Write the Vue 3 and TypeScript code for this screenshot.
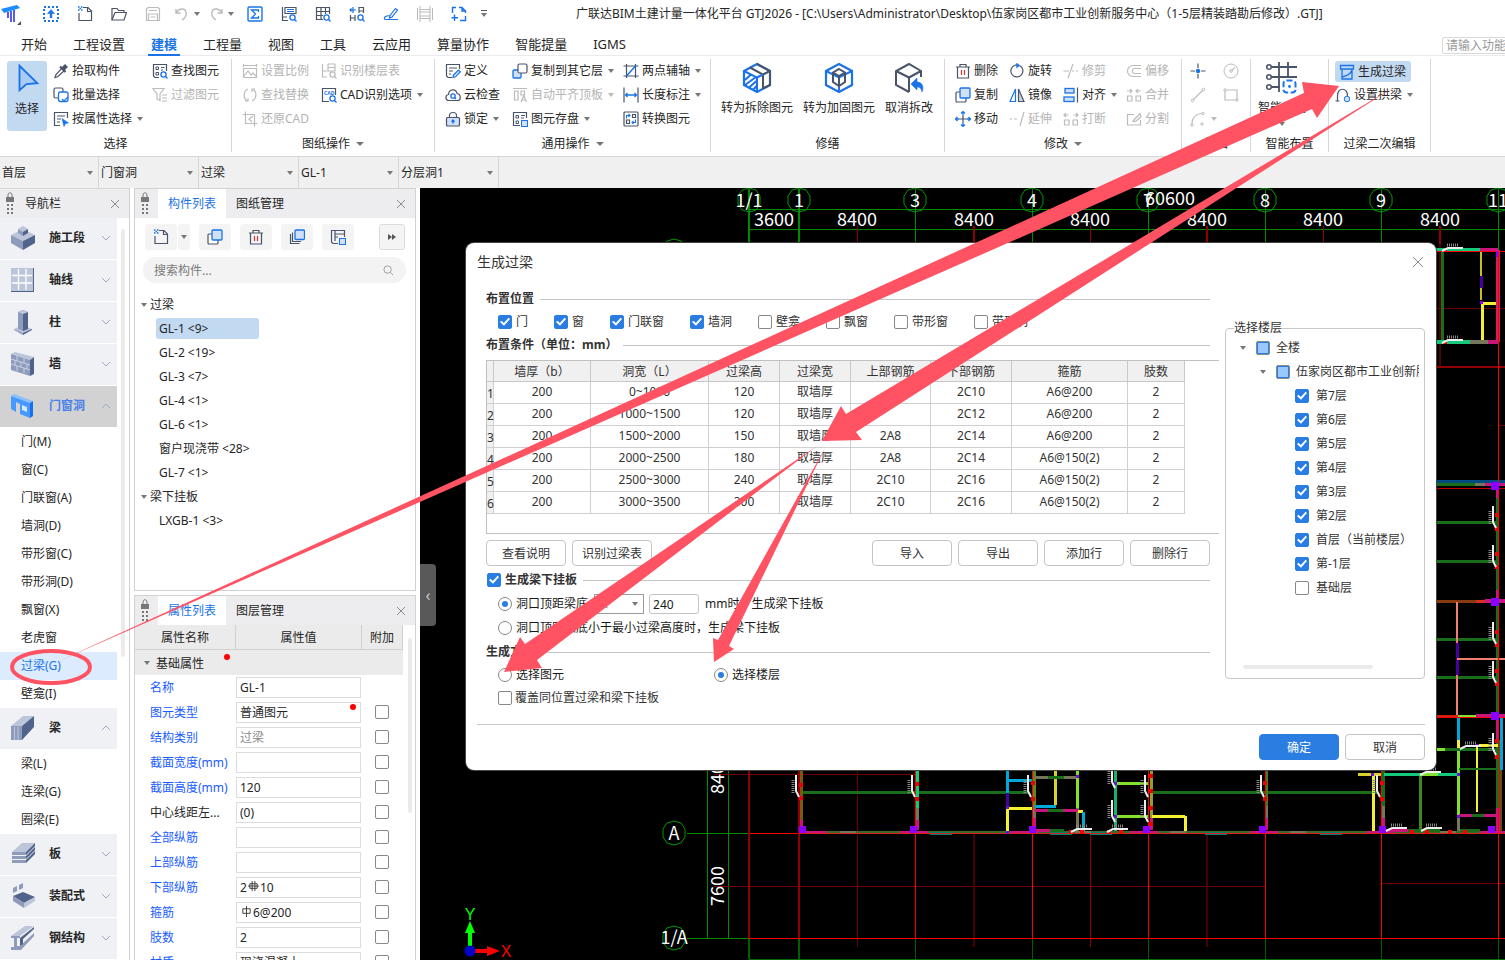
<script setup lang="ts">
import { ref } from 'vue'

interface RibbonItem { t?: string; i: string; off?: boolean; dd?: boolean; on?: boolean }
interface RibbonCol { w: number; big?: boolean; items: RibbonItem[] }
interface RibbonGroup { label: string; dd?: boolean; w: number; pad: number; cols: RibbonCol[] }
type Seg = [number, number, number, number, string, number]

const D = '#4a5468'
const B = '#1a73e8'
const G = '#bcbcbc'
const L = '#cfe0f7'
const p = (d: string, c = D, f = 'none', w = 1.2) =>
  `<path d="${d}" stroke="${c}" fill="${f}" stroke-width="${w}"/>`
const lens = (c = B) => `<circle cx="11.5" cy="11.5" r="2.6" stroke="${c}" stroke-width="1.3" fill="#fff"/>` + p('M13.5 13.5L15.5 15.5', c)

const icons: Record<string, string> = {
  upload: `<rect x="1" y="1" width="14" height="14" fill="none" stroke="${B}" stroke-width="2" stroke-dasharray="2 2"/>` + p('M8 12V6', B, 'none', 2.4) + p('M4.5 7.5L8 3.5L11.5 7.5Z', B, B, 0.6),
  newdoc: p('M6 1.5H11L14.5 5V14.5H2V7') + p('M10.5 1.5V5.5H14.5') + p('M1 1H2.5M4 1H5.5M2.5 2.5H4M1 4H2.5M4 4H5.5', B, 'none', 1.5),
  open: p('M1 14V2.5H6L7.5 4.5H13V6.5') + p('M1 14L4 6.5H15.5L13 14Z'),
  save: p('M1.5 3L3 1.5H13L14.5 3V14.5H1.5Z', G) + p('M4 4.5H12M3.5 14V8H12.5V14M5.5 11H10.5', G),
  undo: p('M2 3V7H6.5M2.5 6.5C5 2 11 2 12 6C13 9 11 12 8 14', G, 'none', 1.4),
  redo: p('M14 3V7H9.5M13.5 6.5C11 2 5 2 4 6C3 9 5 12 8 14', G, 'none', 1.4),
  sum: `<rect x="1" y="1" width="14" height="14" rx="1" fill="none" stroke="${B}" stroke-width="1.4"/>` + p('M11.5 6V4H4.5L8.5 8L4.5 12H11.5V10', B, 'none', 1.3),
  sheetfind: p('M1.5 1V14.5H7M1.5 11H6M4 1.5H15V7.5H4Z') + p('M6 3.5H13M6 5.5H13', B, 'none', 1.2) + lens(),
  gridfind: p('M8 13.5H1.5V1.5H14.5V8M1.5 5.5H14.5M1.5 9.5H8M6 1.5V13.5M10.5 1.5V8') + lens(),
  linkfind: p('M4 1V7M1 4H7M2.5 2.5L1 4L2.5 5.5', B) + p('M1.5 9V15M6 9V15M1.5 12H6M10 7V1.5H14.5V7M10 5H14.5') + lens(),
  pen: p('M7 9.5L12.5 2.5L14.5 4L9 11L6.5 12Z', B) + p('M7 10C3 9 0 12 2 13.5H15', B),
  film: p('M3 0V16M13 0V16M3 3.5H13M3 12.5H13M0.5 2V14M15.5 2V14M3 6H13M3 10H13', G, 'none', 1.1),
  addframe: p('M1.5 7V1.5H5M8 1.5H11L14.5 5V7M14.5 10V14.5H9M14.5 5H11V1.5', B, 'none', 1.4) + p('M3.5 8.5V15M0.5 11.7H7', B, 'none', 1.4),
  drop: p('M2 14.5L3 11.5L9 5L11.5 7.5L5 13.5Z', D) + p('M7 3.5L12.5 9', D, 'none', 2.2) + p('M9.5 6.5L13.5 2.5', D, 'none', 4),
  findel: p('M7 14.5H3L1.5 13V1.5H14.5V8') + p('M4 4H6.5V6.5H4ZM4 9.5H6.5V12H4ZM9 4.5H12.5M9 7H11', D, 'none', 1) + lens(),
  batch: `<rect x="1" y="1" width="9" height="10" rx="1.5" fill="none" stroke="${D}" stroke-width="1.2"/><rect x="5.5" y="5" width="9.5" height="9.5" rx="2" fill="#fff" stroke="${B}" stroke-width="1.3"/>` + p('M9 12L11 14L15 10', B),
  filter: p('M1 1.5H12L8 7V13.5L5 12V7Z', G) + p('M10 8H15M10 11H15M10 14H15', G),
  attr: p('M7 14.5H1.5V1.5H14.5V7') + p('M4 5H12M4 8H8M4 11H7') + p('M9 7.5L15.5 12L12.5 12.5L11 15.5Z', B, B, 0.6),
  scale: p('M1.5 1V4M14.5 1V4M1.5 2.5H14.5M1.5 5.5H14.5V14.5H1.5ZM2 13L6 8L9 12L11 10L14 13', G),
  floor: p('M1.5 1V14H6M1.5 8H6M7 1V8H14V1M7 4.5H14M7 1H14', G) + lens(G),
  swap: p('M6 2C1 4 1 11 5 14M10 14C15 12 15 5 11 2M3 14H6V11M13 2H10V5', G),
  cad: p('M8 14.5H1.5V1.5H14.5V8') + `<text x="3" y="7.5" font-size="5" font-weight="700" font-family="Noto Sans" fill="${B}">CAD</text>` + lens(),
  crop: p('M3.5 0.5V12.5H15.5M0.5 3.5H12.5V15.5M11 5L7 8L10 11', G),
  define: p('M7 14.5H3L1.5 13V1.5H14.5V6') + p('M4 5H12M4 8H8M4 11H6') + p('M8.5 12L13.5 7L15.3 8.8L10.5 13.8L8 14.5Z', B, L),
  cloud: p('M4 13.5C0 13.5 0 8 3.5 7.5C4 1.5 11 1.5 12 6.5C16.5 7.5 16 13.5 12.5 13.5Z') + `<circle cx="8" cy="9" r="2.2" stroke="${B}" stroke-width="1.3" fill="none"/>` + p('M9.5 10.5L11 12', B),
  lock: p('M4.5 7V4.5C4.5 0.5 11.5 0.5 11.5 4.5V7') + `<rect x="1.5" y="6.5" width="13" height="8.5" rx="1" fill="${L}" stroke="${D}" stroke-width="1.2"/>` + p('M8 12.5V9.5M6.5 10.8L8 9.2L9.5 10.8', B, 'none', 1.5),
  copyfloor: `<rect x="1" y="7" width="8" height="8" rx="1" fill="${L}" stroke="${B}" stroke-width="1.3"/><rect x="6" y="1" width="9" height="9" rx="1.5" fill="#fff" stroke="${D}" stroke-width="1.2"/>`,
  align0: p('M1 1.5H15M2.5 4H6V13H2.5ZM9 4H12.5V8H9ZM9 15L11.8 8.5L14.5 15M10 13H13.5', G),
  savedisk: p('M8 14.5H1.5V1.5H14.5V7') + p('M4 4.5H6.5V7H4ZM4 10H6.5V12.5H4ZM9 4.5H13M9 7H12', D, 'none', 1) + `<rect x="9.5" y="9.5" width="6" height="6" fill="${L}" stroke="${B}"/>`,
  axis2: p('M3.5 1V15M12.5 1V15M0.5 3H15.5M0.5 13H15.5') + p('M3.5 13L12.5 3', B, 'none', 1.5),
  length: p('M1 0.5V15.5M15 0.5V15.5') + p('M3 8H13M4.5 6L2.5 8L4.5 10M11.5 6L13.5 8L11.5 10', B, 'none', 1.3),
  convert: `<rect x="1" y="1" width="14" height="14" rx="1" fill="none" stroke="${D}" stroke-width="1.2"/>` + p('M9.5 3.5H12.5V6.5H9.5ZM3.5 9H6.5V12.5H3.5Z') + p('M3.5 7.5V4.5H7M5.5 3L7 4.5L5.5 6M12.5 8.5V11.5H9M10.5 10L9 11.5L10.5 13', B, 'none', 1.1),
  trash: p('M1 4H15M5 4V1.5H11V4M2.5 4V15H13.5V4') + p('M6.5 7V12M9.5 7V12', '#d93030'),
  rotate: p('M10.5 2.5A6 6 0 1 1 6 2.2M6 2.2C7 2 8 2 9 2.2') + p('M7.5 0L11 2.5L7.5 5Z', B, B, 0.4),
  trim: p('M0.5 8H6M9 8H11M13 8H15M10 1L5 15', G),
  offset: p('M15 2.5H7A5.5 5.5 0 0 0 7 13.5H15M15 5.5H8A2.7 2.7 0 0 0 8 10.5H15', G),
  copy: `<rect x="1" y="5" width="10" height="10" rx="1" fill="#fff" stroke="${D}" stroke-width="1.2"/><rect x="5" y="1" width="10" height="10" rx="1" fill="${L}" stroke="${B}" stroke-width="1.3"/>`,
  mirror: p('M6.5 2V14.5H1Z', B, 'none', 1.2) + p('M9.5 2V14.5H15Z', D, '#cdd4e0'),
  align: `<rect x="2" y="1.5" width="9" height="4.5" fill="${L}" stroke="${B}" stroke-width="1.3"/><rect x="1" y="10" width="10" height="4.5" fill="${L}" stroke="${B}" stroke-width="1.3"/>` + p('M14.5 0.5V15.5'),
  merge: p('M1.5 9H6V14H1.5ZM10 9H14.5V14H10ZM1 4H5.5M4 2L6 4L4 6M15 4H10.5M12 2L10 4L12 6', G),
  move: p('M8 4V12M4 8H12', D) + p('M8 0.5V4M8 12V15.5M0.5 8H4M12 8H15.5M6 2.5L8 0.5L10 2.5M6 13.5L8 15.5L10 13.5M2.5 6L0.5 8L2.5 10M13.5 6L15.5 8L13.5 10', B, 'none', 1.3),
  extend: p('M0.5 8H3M5 8H8M15 1L11 15', G),
  brk: p('M1.5 9H6V14H1.5ZM10 9H14.5V14H10ZM1 4H5.5M3 2L1 4L3 6M15 4H10.5M13 2L15 4L13 6', G),
  split: p('M8 3.5H1.5V14H14.5V9M7 10L14 2.5L15 5.5L9.5 10.5Z', G),
  point: p('M8 0.5V5M8 11V15.5M0.5 8H5M11 8H15.5') + `<circle cx="8" cy="8" r="2.2" fill="${B}"/>`,
  circle: `<circle cx="8" cy="8" r="7" fill="none" stroke="${G}"/>` + p('M8 8L12 4.5', G) + `<circle cx="8" cy="8" r="1.3" fill="#fff" stroke="${G}"/>`,
  line: p('M3 13L13 3', G) + `<circle cx="2.5" cy="13.5" r="1.3" fill="#fff" stroke="${G}"/><circle cx="13.5" cy="2.5" r="1.3" fill="#fff" stroke="${G}"/>`,
  rect: p('M2 3H14V13H2Z', G) + `<circle cx="2" cy="3" r="1.2" fill="#fff" stroke="${G}"/><circle cx="14" cy="13" r="1.2" fill="#fff" stroke="${G}"/>`,
  arc: p('M2 13C2 7 5 3 12 2.5', G) + `<circle cx="2" cy="14" r="1.2" fill="#fff" stroke="${G}"/><circle cx="13" cy="2.5" r="1.2" fill="#fff" stroke="${G}"/><circle cx="12" cy="13" r="1.2" fill="#fff" stroke="${G}"/>`,
  lintel: p('M1.5 1.5H14.5V5H1.5ZM3 5V15H13V5M3 13C8 12 12 9 13 6', B, 'none', 1.3),
  arch: p('M2.5 14V9C2 0 13 0 12.5 9M0.5 14H4.5', D) + `<circle cx="12" cy="12" r="2.8" fill="${L}" stroke="${B}"/>`,
  layers: p('M1.5 5V14.5H10.5M3.5 3.5V12.5H12') + `<rect x="6" y="1" width="9.5" height="9.5" rx="1" fill="${L}" stroke="${B}" stroke-width="1.3"/>`,
  store: p('M8 14.5H3L1.5 13V1.5H14.5V8M5 1.5V12M5 5H14M5 8H8') + `<rect x="9.5" y="9.5" width="6" height="6" fill="${L}" stroke="${B}"/>`,
}

const big: Record<string, string> = {
  cursor: p('M8 3V29L15.5 22.5L27 21.5Z', B, '#a9cbf5', 2),
  demolish: p('M16 2L29 9V23L16 30L3 23V9Z', B, '#fff', 2.2) + p('M9 5.5L22 12.5V26.5M16 2L29 9V23L22 26.5M22 12.5L29 9', D, 'none', 2) + p('M3 9L16 15.5V30M16 15.5L22 12.5M4 18L10 12.5M4 23L15 15M8 25.5L15.5 19M12 28L15.5 24', B, 'none', 2),
  reinforce: p('M16 2L29 9V23L16 30L3 23V9Z', B, '#fff', 2.2) + p('M3 9L16 15.5L29 9M16 15.5V30', B, 'none', 2) + p('M16 7L22 10.5V20L16 24L10 20V10.5ZM10 10.5L16 14L22 10.5M16 14V24', D, 'none', 2),
  restore: p('M28 15V9L16 2L3 9V23L16 30M3 9L16 15.5L28 9M16 15.5V30', D, 'none', 2) + p('M18 22L24 16V20C30 20 31 26 29 30C28 26 27 25 24 25V28Z', B, B, 0.6),
  smart: p('M5 5H31M5 15H31M5 25H14M13 0V30M22 0V14', D, 'none', 1.8) + `<circle cx="3" cy="5" r="2.3" stroke="${D}" stroke-width="1.6" fill="#fff"/><circle cx="3" cy="15" r="2.3" stroke="${D}" stroke-width="1.6" fill="#fff"/><circle cx="3" cy="25" r="2.3" stroke="${D}" stroke-width="1.6" fill="#fff"/><rect x="17.5" y="18.5" width="12" height="12" rx="3" fill="#fff" stroke="${B}" stroke-width="2" stroke-dasharray="6 2.5"/><circle cx="23.5" cy="24.5" r="1.4" fill="${B}"/>`,
}

const c1 = '#bcc5da'
const c2 = '#8e9bbb'
const c3 = '#50638a'
const f = (d: string, c: string) => `<path d="${d}" fill="${c}"/>`
const navIcons: Record<string, string> = {
  stage: f('M2 11L14 5L26 11L14 17Z', c1) + f('M2 11L14 17V26L2 19Z', c2) + f('M26 11L14 17V26L26 19Z', c3) + f('M9 5L14 2L19 5L14 8Z', c1) + f('M9 5L14 8V12L9 9Z', c2) + f('M19 5L14 8V12L19 9Z', c3),
  axis: f('M2 2H25V26H2Z', c3) + f('M2 2H24V25H2Z', c1) + '<path d="M9.5 3V24M17 3V24M3 9.5H23M3 17H23" stroke="#fff" stroke-width="1.3"/>',
  column: f('M5 21L14 17L23 21L14 26Z', c1) + f('M5 21L14 25V27L5 22Z', c2) + f('M23 21L14 25V27L23 22Z', c3) + f('M9 4L14 2L19 4V21L14 23L9 21Z', c2) + f('M14 6L19 4V21L14 23Z', c3) + f('M9 4L14 2L19 4L14 6Z', c1),
  wall: f('M2 4L6 2L25 7L21 10Z', c1) + f('M2 4L21 10V26L2 20Z', c2) + f('M21 10L25 7V24L21 26Z', c3) + '<path d="M2 9L21 15M2 14L21 20M8 6V11M15 8V13M6 10V15M12 12V17M18 14V19M8 16V21M15 18V23" stroke="#c9d1e2" stroke-width="1"/>',
  door: f('M2 4L5 2L24 9L21 11Z', '#8ac0ff') + f('M2 4L21 11V26L11 22V12L7 10V20L2 17Z', '#469aff') + f('M21 11L24 9V24L21 26Z', '#1a6ff0') + f('M13 13L18 15V20L13 18Z', '#d5e8ff'),
  beam: f('M2 12L14 2H25L13 12Z', c1) + f('M2 12H13V26H2Z', c2) + f('M13 12L25 2V13L13 26Z', c3) + '<path d="M5.5 13V26M9 13V26" stroke="#bcc5da"/>',
  slab: f('M3 12L13 3H26L17 12Z', c1) + f('M3 12H17V15H3ZM3 16H17V19H3ZM3 20H17V23H3Z', c2) + f('M17 12L26 3V6L17 15ZM17 16L26 7V10L17 19ZM17 20L26 11V14L17 23Z', c3),
  prefab: f('M4 14L14 10L26 15L15 21Z', c3) + f('M4 14L15 21V26L4 19Z', c2) + f('M15 21L26 15V19L15 26Z', c1) + f('M4 6L8 4V9L4 11ZM10 3L14 1V6L10 8Z', c2),
  steel: f('M2 12L16 2H25L11 12Z', c1) + f('M2 12H11V14H8V22H11L25 9V12L12 26H2V23H5V14H2Z', c2) + f('M11 14L25 3V5L14 15V20L11 22Z', c3),
}

const quick: RibbonItem[] = [
  { i: 'upload', t: '上传' }, { i: 'newdoc', t: '新建' }, { i: 'open', t: '打开' }, { i: 'save', t: '保存' },
  { i: 'undo', t: '撤销', dd: true, off: true }, { i: 'redo', t: '恢复', dd: true, off: true }, { i: 'sum', t: '汇总' },
  { i: 'sheetfind', t: '查看报表' }, { i: 'gridfind', t: '查看工程量' }, { i: 'linkfind', t: '查看计算式' },
  { i: 'pen', t: '标注' }, { i: 'film', t: '视频' }, { i: 'addframe', t: '添加' },
]
const tabs = ['开始', '工程设置', '建模', '工程量', '视图', '工具', '云应用', '算量协作', '智能提量', 'IGMS']

const groups: RibbonGroup[] = [
  { label: '选择', w: 232, pad: 7, cols: [
    { w: 46, big: true, items: [{ t: '选择', i: 'cursor', on: true }] },
    { w: 99, items: [{ t: '拾取构件', i: 'drop' }, { t: '批量选择', i: 'batch' }, { t: '按属性选择', i: 'attr', dd: true }] },
    { w: 74, items: [{ t: '查找图元', i: 'findel' }, { t: '过滤图元', i: 'filter', off: true }] },
  ] },
  { label: '图纸操作', dd: true, w: 203, pad: 10, cols: [
    { w: 79, items: [{ t: '设置比例', i: 'scale', off: true }, { t: '查找替换', i: 'swap', off: true }, { t: '还原CAD', i: 'crop', off: true }] },
    { w: 108, items: [{ t: '识别楼层表', i: 'floor', off: true }, { t: 'CAD识别选项', i: 'cad', dd: true }] },
  ] },
  { label: '通用操作', dd: true, w: 276, pad: 10, cols: [
    { w: 67, items: [{ t: '定义', i: 'define' }, { t: '云检查', i: 'cloud' }, { t: '锁定', i: 'lock', dd: true }] },
    { w: 111, items: [{ t: '复制到其它层', i: 'copyfloor', dd: true }, { t: '自动平齐顶板', i: 'align0', dd: true, off: true }, { t: '图元存盘', i: 'savedisk', dd: true }] },
    { w: 84, items: [{ t: '两点辅轴', i: 'axis2', dd: true }, { t: '长度标注', i: 'length', dd: true }, { t: '转换图元', i: 'convert' }] },
  ] },
  { label: '修缮', w: 234, pad: 5, cols: [
    { w: 82, big: true, items: [{ t: '转为拆除图元', i: 'demolish' }] },
    { w: 82, big: true, items: [{ t: '转为加固图元', i: 'reinforce' }] },
    { w: 58, big: true, items: [{ t: '取消拆改', i: 'restore' }] },
  ] },
  { label: '修改', dd: true, w: 237, pad: 10, cols: [
    { w: 54, items: [{ t: '删除', i: 'trash' }, { t: '复制', i: 'copy' }, { t: '移动', i: 'move' }] },
    { w: 54, items: [{ t: '旋转', i: 'rotate' }, { t: '镜像', i: 'mirror' }, { t: '延伸', i: 'extend', off: true }] },
    { w: 63, items: [{ t: '修剪', i: 'trim', off: true }, { t: '对齐', i: 'align', dd: true }, { t: '打断', i: 'brk', off: true }] },
    { w: 50, items: [{ t: '偏移', i: 'offset', off: true }, { t: '合并', i: 'merge', off: true }, { t: '分割', i: 'split', off: true }] },
  ] },
  { label: '绘图', w: 69, pad: 8, cols: [
    { w: 33, items: [{ i: 'point' }, { i: 'line', off: true }, { i: 'arc', off: true, dd: true }] },
    { w: 20, items: [{ i: 'circle', off: true }, { i: 'rect', off: true }] },
  ] },
  { label: '智能布置', w: 78, pad: 0, cols: [{ w: 62, big: true, items: [{ t: '智能布置', i: 'smart', dd: true }] }] },
  { label: '过梁二次编辑', w: 102, pad: 6, cols: [{ w: 88, items: [{ t: '生成过梁', i: 'lintel', on: true }, { t: '设置拱梁', i: 'arch', dd: true }] }] },
]

const selectors = ['首层', '门窗洞', '过梁', 'GL-1', '分层洞1']

const nav = [
  { t: '施工段', i: 'stage' }, { t: '轴线', i: 'axis' }, { t: '柱', i: 'column' }, { t: '墙', i: 'wall' },
  { t: '门窗洞', i: 'door', open: true, on: true, subs: ['门(M)', '窗(C)', '门联窗(A)', '墙洞(D)', '带形窗(C)', '带形洞(D)', '飘窗(X)', '老虎窗', '过梁(G)', '壁龛(I)'] },
  { t: '梁', i: 'beam', open: true, subs: ['梁(L)', '连梁(G)', '圈梁(E)'] },
  { t: '板', i: 'slab' }, { t: '装配式', i: 'prefab' }, { t: '钢结构', i: 'steel' },
]

const tree = [
  { t: '过梁', kids: ['GL-1 <9>', 'GL-2 <19>', 'GL-3 <7>', 'GL-4 <1>', 'GL-6 <1>', '窗户现浇带 <28>', 'GL-7 <1>'] },
  { t: '梁下挂板', kids: ['LXGB-1 <3>'] },
]

const props = [
  { n: '名称', v: 'GL-1', blue: true, nocheck: true },
  { n: '图元类型', v: '普通图元', blue: true, dot: true },
  { n: '结构类别', v: '过梁', blue: true, grey: true },
  { n: '截面宽度(mm)', v: '', blue: true },
  { n: '截面高度(mm)', v: '120', blue: true },
  { n: '中心线距左...', v: '(0)' },
  { n: '全部纵筋', v: '', blue: true },
  { n: '上部纵筋', v: '', blue: true },
  { n: '下部纵筋', v: '2', bar: 3, tail: '10', blue: true },
  { n: '箍筋', v: '', bar: 1, tail: '6@200', blue: true },
  { n: '肢数', v: '2', blue: true },
  { n: '材质', v: '现浇混凝土', blue: true },
]

const places = ref([
  { t: '门', on: true, w: 56 }, { t: '窗', on: true, w: 56 }, { t: '门联窗', on: true, w: 80 }, { t: '墙洞', on: true, w: 68 },
  { t: '壁龛', on: false, w: 68 }, { t: '飘窗', on: false, w: 68 }, { t: '带形窗', on: false, w: 80 }, { t: '带形洞', on: false, w: 60 },
])
const heads = ['', '墙厚（b）', '洞宽（L）', '过梁高', '过梁宽', '上部钢筋', '下部钢筋', '箍筋', '肢数']
const colW = [7, 97, 118, 71, 71, 80, 81, 116, 57]
const rows = [
  ['1', '200', '0~1000', '120', '取墙厚', '', '2C10', 'A6@200', '2'],
  ['2', '200', '1000~1500', '120', '取墙厚', '', '2C12', 'A6@200', '2'],
  ['3', '200', '1500~2000', '150', '取墙厚', '2A8', '2C14', 'A6@200', '2'],
  ['4', '200', '2000~2500', '180', '取墙厚', '2A8', '2C14', 'A6@150(2)', '2'],
  ['5', '200', '2500~3000', '240', '取墙厚', '2C10', '2C16', 'A6@150(2)', '2'],
  ['6', '200', '3000~3500', '300', '取墙厚', '2C10', '2C16', 'A6@150(2)', '2'],
]
const floors = ref([
  { t: '第7层', on: true }, { t: '第6层', on: true }, { t: '第5层', on: true }, { t: '第4层', on: true }, { t: '第3层', on: true },
  { t: '第2层', on: true }, { t: '首层（当前楼层）', on: true }, { t: '第-1层', on: true }, { t: '基础层', on: false },
])
const plate = ref(true)
const plateMode = ref('gap')
const mode = ref('floor')
const cover = ref(false)
const gap = ref('240')

/* drawing canvas */
const axes = [
  { x: 749, n: '1/1' }, { x: 799, n: '1' }, { x: 915, n: '3' }, { x: 1032, n: '4' },
  { x: 1148, n: '7' }, { x: 1265, n: '8' }, { x: 1381, n: '9' }, { x: 1498, n: '11' },
]
const dims = [{ x: 774, n: '3600' }, ...[857, 974, 1090, 1207, 1323, 1440].map((x) => ({ x, n: '8400' }))]
const gr = '#008a00'
const rd = '#ff0000'
const dr = '#6e0000'
const beam = '#1a6e1a'
const pk = '#c8147c'
const ye = '#f5f032'
const li = '#84e02c'
const cy = '#00a8d8'
const pu = '#8a00ff'
const gy = '#76765a'
const te = '#14c87c'

const segs: Seg[] = [
  [749, 209, 1505, 209, gr, 1], [749, 229, 1505, 229, gr, 1],
  ...axes.map((a): Seg => [a.x, 189, a.x, 250, gr, a.x < 800 ? 2 : 1]),
  ...dims.slice(1).map((d, i): Seg => [d.x, 226, d.x, 244, '#900000', i % 2 ? 2 : 1]),
  // north-east room
  [1440, 244, 1440, 367, '#500000', 2], [1436, 367, 1505, 367, '#900000', 2], [1436, 308, 1505, 308, dr, 1],
  [1442, 252, 1442, 340, beam, 3], [1436, 250, 1480, 250, te, 4], [1480, 250, 1498, 250, pk, 4], [1436, 251, 1505, 251, rd, 1],
  [1481, 252, 1481, 276, '#c8c020', 2], [1481, 276, 1481, 288, '#48009a', 3], [1481, 288, 1481, 300, '#c8c020', 2],
  [1482, 304, 1482, 341, ye, 3], [1482, 303, 1498, 303, ye, 3], [1480, 302, 1483, 302, pu, 3],
  [1436, 342, 1470, 342, te, 4], [1470, 342, 1488, 342, gy, 4], [1488, 342, 1499, 342, pk, 4],
  [1498, 250, 1498, 342, '#d0205a', 4], [1496, 254, 1499, 254, pu, 6], [1443, 250, 1447, 250, rd, 3], [1443, 342, 1447, 342, rd, 3],
  // east wing
  [1436, 481, 1505, 481, '#004c80', 3], [1436, 484, 1475, 484, beam, 3], [1475, 484, 1485, 484, gy, 3], [1485, 484, 1505, 484, pk, 3], [1436, 488, 1505, 488, '#c00000', 1],
  [1498, 425, 1505, 425, dr, 1],
  [1497, 490, 1497, 498, pk, 3], [1497, 498, 1497, 590, beam, 3], [1497, 590, 1497, 606, pk, 3], [1497, 606, 1497, 712, beam, 3], [1497, 712, 1497, 740, pk, 3], [1498, 740, 1498, 808, beam, 4], [1498, 808, 1498, 832, pk, 4],
  ...[522, 561, 639, 677].map((y): Seg => [1436, y, 1496, y, beam, 3]),
  [1436, 601, 1476, 601, '#8a3a10', 3], [1476, 601, 1485, 601, '#d83020', 3], [1485, 601, 1505, 601, pk, 4],
  [1457, 602, 1457, 715, '#f08070', 2], [1457, 643, 1457, 675, '#48009a', 3], [1457, 659, 1505, 659, '#f08070', 2],
  [1436, 716, 1458, 716, '#d02010', 3], [1458, 716, 1476, 716, li, 3], [1476, 716, 1505, 716, pk, 4], [1436, 717, 1505, 717, rd, 1],
  [1458, 718, 1458, 740, cy, 3], [1458, 740, 1458, 749, ye, 3], [1458, 750, 1458, 815, li, 3], [1458, 815, 1458, 832, gy, 3],
  [1436, 749, 1445, 749, li, 3], [1445, 749, 1498, 749, beam, 3], [1477, 745, 1498, 745, ye, 3], [1477, 746, 1477, 812, ye, 2],
  [1459, 769, 1497, 769, beam, 2], [1501, 718, 1501, 770, cy, 3], [1501, 770, 1501, 832, '#6a4a10', 2],
  // south grid
  [707, 771, 707, 939, gr, 1], [728, 771, 728, 939, gr, 1], [714, 774, 915, 774, dr, 1], [714, 886, 1265, 886, dr, 1], [1381, 883, 1505, 883, dr, 1],
  [687, 833, 749, 833, gr, 1], [749, 833, 1505, 833, rd, 1], [687, 938, 749, 938, gr, 1],
  [749, 771, 749, 938, '#900000', 2], [799, 771, 799, 938, '#900000', 2],
  [857, 771, 857, 947, dr, 1], [974, 833, 974, 947, '#480000', 2], [1090, 833, 1090, 947, '#900000', 1], [1207, 833, 1207, 947, '#480000', 2],
  ...axes.map((a): Seg => [a.x, 938, a.x, 959, '#006000', a.x < 800 ? 2 : 1]),
  [749, 959, 1505, 959, '#006a00', 1],
  // south block
  [801, 792, 1029, 792, beam, 3], [1152, 792, 1378, 792, beam, 3],
  [801, 771, 801, 820, '#7a5a10', 3], [801, 820, 801, 830, pk, 3], [917, 771, 917, 808, te, 3], [917, 808, 917, 820, gy, 3], [917, 820, 917, 830, pk, 3],
  [1034, 771, 1034, 806, '#5a8a20', 3], [1034, 806, 1034, 818, gy, 3], [1034, 818, 1034, 830, pk, 3],
  [1151, 771, 1151, 818, '#9a9a28', 3], [1151, 818, 1151, 830, pk, 3], [1266, 771, 1266, 806, '#4a7a20', 3], [1266, 806, 1266, 818, gy, 3], [1266, 818, 1266, 830, pk, 3],
  [1383, 771, 1383, 806, beam, 3], [1383, 806, 1383, 818, gy, 3], [1383, 818, 1383, 830, pk, 3],
  [799, 832, 1498, 832, '#3a6a28', 3],
  ...[799, 900, 1010, 1130, 1250, 1366, 1480].map((x): Seg => [x, 832, x + 28, 832, pk, 3]),
  ...[930, 1050, 1090, 1205, 1320].map((x): Seg => [x, 833, x + 22, 833, '#00806a', 3]),
  ...[840, 1075, 1170, 1290, 1440].map((x): Seg => [x, 832, x + 16, 832, gy, 3]),
  [1007, 771, 1007, 793, cy, 3], [1007, 793, 1007, 806, '#48009a', 3], [1007, 808, 1007, 831, ye, 3], [1007, 780, 1032, 780, cy, 3], [1007, 808, 1032, 808, ye, 3],
  [1055, 771, 1055, 805, '#d8d030', 3], [1035, 806, 1056, 806, cy, 3], [1077, 771, 1077, 808, li, 3], [1077, 808, 1077, 831, gy, 3],
  [1035, 777, 1048, 777, gy, 3], [1048, 777, 1064, 777, beam, 3], [1064, 777, 1076, 777, gy, 3],
  [1035, 810, 1048, 810, pk, 3], [1048, 810, 1063, 810, beam, 3], [1063, 810, 1078, 810, pk, 3], [1035, 830, 1050, 830, pk, 3], [1050, 830, 1064, 830, beam, 3],
  [1078, 811, 1083, 811, ye, 3], [1083, 812, 1083, 831, cy, 3],
  [1115, 771, 1115, 831, '#18b070', 3], [1117, 783, 1149, 783, li, 3], [1117, 816, 1149, 816, li, 3], [1152, 816, 1185, 816, ye, 3], [1185, 816, 1185, 831, ye, 3],
  [1373, 776, 1373, 831, ye, 3], [1358, 774, 1382, 774, '#d8d030', 3], [1384, 774, 1420, 774, te, 3], [1420, 774, 1438, 774, li, 3], [1438, 774, 1458, 774, te, 3],
  [1420, 776, 1420, 830, '#3a8a20', 3], [1459, 815, 1472, 815, pk, 3], [1472, 815, 1484, 815, beam, 3], [1484, 815, 1498, 815, pk, 3],
  [1384, 830, 1408, 830, pk, 3], [1408, 830, 1440, 830, beam, 3], [1460, 830, 1480, 830, beam, 3],
  [799, 833, 1505, 833, '#d82020', 1], [749, 938, 1505, 938, rd, 1],
  ...[915, 1032, 1148, 1265, 1381].map((x): Seg => [x, 771, x, 938, rd, 1]), [1498, 251, 1498, 938, rd, 1],
]
const nodes: [number, number, number, string][] = [
  ...[802, 913, 1032, 1146, 1262, 1382].map((x): [number, number, number, string] => [x, 829, 7, pu]),
  [1491, 829, 7, pu], [1495, 486, 8, pu], [1495, 602, 8, pu], [1495, 716, 8, pu],
  ...[[801, 785], [801, 798], [917, 784], [917, 799], [1033, 783], [1033, 799], [1151, 776], [1151, 791], [1151, 808], [1151, 824], [1265, 783], [1265, 799], [1382, 783], [1382, 799]].map(([x, y]): [number, number, number, string] => [x, y, 4, '#e00']),
  ...[515, 529, 554, 567, 632, 645, 671, 684, 741, 757].map((y): [number, number, number, string] => [1497, y, 4, '#f00']),
  ...[1071, 1082, 1109, 1121, 1412, 1427, 1450, 1465].map((x): [number, number, number, string] => [x, 832, 4, '#f00']),
  ...[[1007, 807], [1007, 832], [1077, 776], [1115, 783], [1115, 816], [1458, 774], [1372, 774], [1458, 816], [1477, 745]].map(([x, y]): [number, number, number, string] => [x, y, 3, '#6a10d8']),
]
const tagsV: [number, number][] = [[796, 775], [912, 775], [1028, 775], [1112, 766], [1112, 800], [1145, 775], [1145, 800], [1261, 775], [1377, 775], [1493, 506], [1493, 545], [1493, 622], [1493, 661], [1493, 733]]
const tagsH: [number, number][] = [[1067, 829], [1103, 829], [1382, 828], [1417, 828], [1438, 248], [1438, 340], [1456, 746], [1416, 772]]
const ring = (x: number, y: number) =>
  Array.from({ length: 10 }, (_, k) => {
    const a = (Math.PI * 2 * k) / 10 + Math.PI / 2
    return `${Math.round(x + 12 * Math.cos(a))},${Math.round(y - 12 * Math.sin(a))}`
  }).join(' ')
</script>

<template>
  <div class="app">
    <header class="titlebar">
      <svg class="logo" viewBox="0 0 24 24" aria-hidden="true">
        <path d="M1 7L17 3L20 6L4 11Z" fill="#1a8cff" />
        <path d="M8 10V16M11 9V20M14 8V20" stroke="#5a5cf0" stroke-width="2" />
        <path d="M21 19V23H17Z" fill="#555" />
      </svg>
      <nav class="quick" aria-label="快速访问">
        <button v-for="q in quick" :key="q.i" :title="q.t" :disabled="q.off">
          <svg class="ico" viewBox="0 0 16 16" v-html="icons[q.i]" />
          <i v-if="q.dd" class="tri" />
        </button>
        <span class="more"><i /><i class="tri" /></span>
      </nav>
      <h1>广联达BIM土建计量一体化平台 GTJ2026 - [C:\Users\Administrator\Desktop\伍家岗区都市工业创新服务中心（1-5层精装踏勘后修改）.GTJ]</h1>
    </header>

    <div class="tabs">
      <button v-for="t in tabs" :key="t" :class="{ on: t === '建模' }">{{ t }}</button>
      <input class="fn" aria-label="功能搜索" placeholder="请输入功能名称" />
    </div>

    <div class="ribbon">
      <section v-for="g in groups" :key="g.label" class="group" :style="{ width: g.w + 'px' }">
        <div class="cols" :style="{ paddingLeft: g.pad + 'px' }">
          <div v-for="(c, ci) in g.cols" :key="ci" class="col" :style="{ width: c.w + 'px' }">
            <button v-for="it in c.items" :key="it.i" :class="{ big: c.big, on: it.on }" :disabled="it.off" :aria-label="it.t || it.i">
              <svg v-if="c.big" class="bigico" viewBox="0 0 32 32" v-html="big[it.i]" />
              <svg v-else class="ico" viewBox="0 0 16 16" v-html="icons[it.i]" />
              <span v-if="it.t">{{ it.t }}</span>
              <i v-if="it.dd" class="tri" />
            </button>
          </div>
        </div>
        <div class="glabel">{{ g.label }}<i v-if="g.dd" class="tri wide" /></div>
      </section>
    </div>

    <div class="selectors">
      <label v-for="s in selectors" :key="s">
        <select :aria-label="s"><option>{{ s }}</option></select>
        <i class="tri" />
      </label>
    </div>

    <main class="work">
      <aside class="nav">
        <div class="phead">
          <svg class="grip" viewBox="0 0 10 24" aria-hidden="true"><path d="M1 5H9V10H1Z" fill="#777" /><path d="M3 5V3C3 0 7 0 7 3V5" fill="none" stroke="#777" /><path d="M2 13H4M6 13H8M2 17H4M6 17H8M2 21H4M6 21H8" stroke="#777" stroke-width="2" /></svg>
          <span class="ptitle">导航栏</span>
          <button class="x" aria-label="关闭"><svg viewBox="0 0 10 10"><path d="M1 1L9 9M9 1L1 9" /></svg></button>
        </div>
        <div class="navbody">
          <div class="navlist">
            <template v-for="n in nav" :key="n.t">
              <button class="navhead" :class="{ on: n.on }">
                <svg class="navico" viewBox="0 0 28 28" v-html="navIcons[n.i]" />
                <b>{{ n.t }}</b>
                <svg class="chev" :class="{ up: n.open }" viewBox="0 0 10 6"><path d="M1 1L5 5L9 1" /></svg>
              </button>
              <button v-for="s in n.subs" :key="s" class="navsub" :class="{ on: s === '过梁(G)' }">{{ s }}</button>
            </template>
          </div>
          <div class="thumb navthumb" />
        </div>
      </aside>

      <div class="side">
        <section class="panel comps">
          <div class="phead">
            <svg class="grip" viewBox="0 0 10 24" aria-hidden="true"><path d="M1 5H9V10H1Z" fill="#777" /><path d="M3 5V3C3 0 7 0 7 3V5" fill="none" stroke="#777" /><path d="M2 13H4M6 13H8M2 17H4M6 17H8M2 21H4M6 21H8" stroke="#777" stroke-width="2" /></svg>
            <button class="ptab on">构件列表</button><button class="ptab">图纸管理</button>
            <button class="x" aria-label="关闭"><svg viewBox="0 0 10 10"><path d="M1 1L9 9M9 1L1 9" /></svg></button>
          </div>
          <div class="tools">
            <div class="pair">
              <button aria-label="新建"><svg class="ico" viewBox="0 0 16 16" v-html="icons.newdoc" /></button>
              <button class="slim" aria-label="新建选项"><i class="tri" /></button>
            </div>
            <button aria-label="复制"><svg class="ico" viewBox="0 0 16 16" v-html="icons.copy" /></button>
            <button aria-label="删除"><svg class="ico" viewBox="0 0 16 16" v-html="icons.trash" /></button>
            <button aria-label="层间复制"><svg class="ico" viewBox="0 0 16 16" v-html="icons.layers" /></button>
            <button aria-label="存档"><svg class="ico" viewBox="0 0 16 16" v-html="icons.store" /></button>
            <button class="next" aria-label="更多"><svg viewBox="0 0 8 6"><path d="M0 0L4 3L0 6ZM4 0L8 3L4 6Z" fill="#555" /></svg></button>
          </div>
          <div class="search">
            <input aria-label="搜索构件" placeholder="搜索构件..." />
            <svg viewBox="0 0 12 12"><circle cx="5" cy="5" r="4" /><path d="M8 8L11 11" /></svg>
          </div>
          <ul class="tree">
            <li v-for="t in tree" :key="t.t">
              <div class="branch"><i class="tri" />{{ t.t }}</div>
              <div v-for="k in t.kids" :key="k" class="leaf" :class="{ on: k === 'GL-1 <9>' }"><span>{{ k }}</span></div>
            </li>
          </ul>
        </section>

        <section class="panel attrs">
          <div class="phead">
            <svg class="grip" viewBox="0 0 10 24" aria-hidden="true"><path d="M1 5H9V10H1Z" fill="#777" /><path d="M3 5V3C3 0 7 0 7 3V5" fill="none" stroke="#777" /><path d="M2 13H4M6 13H8M2 17H4M6 17H8M2 21H4M6 21H8" stroke="#777" stroke-width="2" /></svg>
            <button class="ptab on">属性列表</button><button class="ptab">图层管理</button>
            <button class="x" aria-label="关闭"><svg viewBox="0 0 10 10"><path d="M1 1L9 9M9 1L1 9" /></svg></button>
          </div>
          <div class="attrbody">
            <table class="ptable">
              <colgroup><col class="k" /><col class="v" /><col class="c" /></colgroup>
              <thead><tr><th>属性名称</th><th>属性值</th><th>附加</th></tr></thead>
              <tbody>
                <tr class="cat"><td colspan="3"><i class="tri" />基础属性<i class="dot" /></td></tr>
                <tr v-for="r in props" :key="r.n">
                  <td :class="{ blue: r.blue }">{{ r.n }}</td>
                  <td>
                    <div v-if="r.bar" class="val" role="textbox" :aria-label="r.n">{{ r.v }}<svg viewBox="0 0 12 12"><path d="M2 3H10V8H2Z" /><path :d="r.bar === 3 ? 'M4.500 0V11M7.500 0V11M0 5.500H12' : 'M6 0V12'" /></svg>{{ r.tail }}</div>
                    <div v-else class="val"><input :aria-label="r.n" :value="r.v" :class="{ grey: r.grey }" /><i v-if="r.dot" class="dot" /></div>
                  </td>
                  <td class="mid"><input v-if="!r.nocheck" type="checkbox" :aria-label="r.n + '附加'" /></td>
                </tr>
              </tbody>
            </table>
            <div class="thumb attrthumb" />
          </div>
        </section>
      </div>

      <div class="canvas">
        <svg class="cad" viewBox="420 188 1085 772" width="1085" height="772">
          <g shape-rendering="crispEdges">
            <line v-for="(s, i) in segs" :key="i" :x1="s[0]" :y1="s[1]" :x2="s[2]" :y2="s[3]" :stroke="s[4]" :stroke-width="s[5]" />
            <rect v-for="(n, i) in nodes" :key="i" :x="n[0] - n[2] / 2" :y="n[1] - n[2] / 2" :width="n[2]" :height="n[2]" :fill="n[3]" />
          </g>
          <path v-for="(t, i) in tagsV" :key="'v' + i" :d="`M${t[0]} ${t[1]}v16l3 6`" stroke="#eee" stroke-width="2" fill="none" />
          <path v-for="(t, i) in tagsV" :key="'w' + i" :d="`M${t[0] - 3} ${t[1] + 5}v13`" stroke="#888" stroke-width="3" stroke-dasharray="1 1" fill="none" />
          <path v-for="(t, i) in tagsH" :key="'h' + i" :d="`M${t[0] + 4} ${t[1] + 3}l6 -3h15`" stroke="#eee" stroke-width="2" fill="none" />
          <path v-for="(t, i) in tagsH" :key="'k' + i" :d="`M${t[0] + 9} ${t[1] - 3}h11`" stroke="#888" stroke-width="3" stroke-dasharray="1 1" fill="none" />
          <g fill="none" stroke="#009a00">
            <polygon v-for="a in axes" :key="a.n" :points="ring(a.x, 200)" />
            <polygon :points="ring(674, 251)" /><polygon :points="ring(674, 833)" /><polygon :points="ring(674, 938)" />
          </g>
          <g class="cadtext">
            <text v-for="a in axes" :key="a.n" :x="a.x" y="207">{{ a.n }}</text>
            <text v-for="d in dims" :key="d.x" :x="d.x" y="226">{{ d.n }}</text>
            <text x="1170" y="205">60600</text>
            <text x="674" y="840">A</text><text x="674" y="944">1/A</text>
            <text transform="translate(724 774) rotate(-90)">8400</text>
            <text transform="translate(724 886) rotate(-90)">7600</text>
          </g>
          <path d="M470 946V932" stroke="#0f0" stroke-width="4" /><path d="M465 933L470 921L475 933Z" fill="#0f0" />
          <path d="M475 951H488" stroke="#f00" stroke-width="4" /><path d="M487 946L500 951L487 956Z" fill="#f00" />
          <circle cx="470" cy="951" r="5.500" fill="#0000c8" />
          <g class="xyz"><text x="470" y="920" fill="#0f0">Y</text><text x="506" y="957" fill="#f00">X</text></g>
        </svg>
        <button class="fold" aria-label="收起">‹</button>

        <form class="dialog" role="dialog" aria-label="生成过梁" @submit.prevent>
          <div class="dhead"><h2>生成过梁</h2><button type="button" class="x" aria-label="关闭"><svg viewBox="0 0 10 10"><path d="M0 0L10 10M10 0L0 10" /></svg></button></div>
          <div class="dbody">
            <div class="left">
              <h3>布置位置</h3>
              <div class="checks">
                <label v-for="c in places" :key="c.t" :style="{ width: c.w + 'px' }"><input v-model="c.on" type="checkbox" />{{ c.t }}</label>
              </div>
              <h3 class="wide">布置条件（单位：mm）</h3>
              <div class="tbox">
                <table class="cond">
                  <colgroup><col v-for="(w, i) in colW" :key="i" :style="{ width: w + 'px' }" /></colgroup>
                  <thead><tr><th v-for="(h, i) in heads" :key="i">{{ h }}</th></tr></thead>
                  <tbody><tr v-for="r in rows" :key="r[0]"><td v-for="(c, i) in r" :key="i">{{ c }}</td></tr></tbody>
                </table>
              </div>
              <div class="btns">
                <button type="button">查看说明</button><button type="button">识别过梁表</button>
                <span class="grow" />
                <button type="button">导入</button><button type="button">导出</button><button type="button">添加行</button><button type="button">删除行</button>
              </div>
              <h3 class="plate"><label><input v-model="plate" type="checkbox" />生成梁下挂板</label></h3>
              <div class="line">
                <label><input v-model="plateMode" type="radio" value="gap" />洞口顶距梁底</label>
                <span class="cmp"><select aria-label="比较"><option>≤</option></select><i class="tri" /></span>
                <input v-model="gap" class="num" aria-label="距离" />
                <span>mm时，生成梁下挂板</span>
              </div>
              <div class="line"><label><input v-model="plateMode" type="radio" value="min" />洞口顶距梁底小于最小过梁高度时，生成梁下挂板</label></div>
              <h3>生成方式</h3>
              <div class="line modes">
                <label><input v-model="mode" type="radio" value="element" />选择图元</label>
                <label><input v-model="mode" type="radio" value="floor" />选择楼层</label>
              </div>
              <div class="line cover"><label><input v-model="cover" type="checkbox" />覆盖同位置过梁和梁下挂板</label></div>
            </div>
            <fieldset>
              <legend>选择楼层</legend>
              <div class="frow"><i class="tri" /><label><input type="checkbox" class="part" />全楼</label></div>
              <div class="frow l2"><i class="tri" /><label><input type="checkbox" class="part" />伍家岗区都市工业创新服务中心</label></div>
              <div v-for="x in floors" :key="x.t" class="frow l3"><label><input v-model="x.on" type="checkbox" />{{ x.t }}</label></div>
              <div class="hbar" />
            </fieldset>
          </div>
          <div class="dfoot"><button type="submit" class="ok">确定</button><button type="button">取消</button></div>
        </form>
      </div>
    </main>

    <svg class="marks" viewBox="0 0 1505 960" width="1505" height="960" aria-hidden="true">
      <g fill="#ff5262">
        <path d="M59 661L1304 93L1302 82L1339 86L1317 118L1312 109Z" />
        <path d="M1394 87L846 414L841 406L822 441L862 440L856 432Z" />
        <path d="M817 446L525 644L520 637L504 672L542 668L537 660Z" />
        <path d="M825 448L718 640L713 638L714 662L734 649L729 646Z" />
      </g>
      <ellipse cx="51" cy="667" rx="39" ry="16" fill="none" stroke="#ff5262" stroke-width="4" />
    </svg>
  </div>
</template>

<style>
html, body { margin: 0; height: 100%; overflow: hidden; background: #fff; }
</style>

<style scoped>
.app { position: relative; display: flex; flex-direction: column; height: 100vh; overflow: hidden; background: #fff; color: #262626; font-family: "Noto Sans", "Noto Sans CJK SC", sans-serif; font-size: 12px; line-height: 16px; white-space: nowrap; }
.app * { box-sizing: border-box; }
button, input, select { font: inherit; color: inherit; }
button { padding: 0; border: 0; background: none; }
button:disabled { color: #b4b4b4; }
.ico { width: 16px; height: 16px; flex: none; fill: none; }
.tri { flex: none; width: 0; height: 0; border: 3px solid transparent; border-top: 4px solid #777; border-bottom: 0; }
.tri.wide { border-width: 4px 4px 0; margin-left: 6px; }
.dot { width: 6px; height: 6px; border-radius: 3px; background: #f00; }

.titlebar { display: flex; align-items: center; height: 27px; flex: none; }
.logo { width: 24px; height: 24px; flex: none; margin-right: 10px; fill: none; }
.quick { display: flex; align-items: center; flex: none; }
.quick button { width: 34px; height: 24px; display: flex; align-items: center; justify-content: center; gap: 4px; }
.more { width: 16px; display: flex; flex-direction: column; align-items: center; gap: 2px; }
.more i:first-child { width: 6px; height: 1px; background: #555; }
h1 { margin: 0 0 0 84px; font-size: 12px; font-weight: 400; overflow: hidden; }

.tabs { display: flex; height: 29px; flex: none; padding-left: 18px; gap: 20px; border-bottom: 1px solid #ebebeb; font-size: 13px; }
.tabs button { height: 29px; padding: 6px 3px 0; border-bottom: 2px solid transparent; }
.tabs button.on { color: #1a73e8; font-weight: 700; border-color: #1a73e8; }
.fn { margin: 10px -40px 0 auto; width: 103px; height: 17px; padding: 0 3px; border: 1px solid #d8d8d8; border-radius: 2px; font-size: 12px; outline: 0; }
.fn::placeholder { color: #999; }

.ribbon { display: flex; height: 101px; flex: none; padding: 3px 0 4px; border-bottom: 1px solid #d6d6d6; }
.group { display: flex; flex-direction: column; flex: none; border-right: 1px solid #d8d8d8; }
.cols { display: flex; flex: none; height: 72px; }
.col { flex: none; display: flex; flex-direction: column; }
.col button { display: flex; align-items: center; gap: 3px; height: 24px; }
.col button .tri { margin-left: 2px; }
.col button:disabled .tri { opacity: .5; }
.col button.on { background: #c2d9f2; border-radius: 3px; height: 21px; width: 76px; padding-left: 4px; margin: 2px 0 1px; }
.col button.big { flex-direction: column; height: 72px; gap: 6px; padding: 3px 0 0; margin: 0; width: 100%; }
.col button.big.on { width: 40px; height: 70px; margin-top: 2px; padding-top: 2px; gap: 8px; }
.col button.big .tri { margin: 0; }
.bigico { width: 32px; height: 32px; flex: none; fill: none; }
.big.on .bigico { width: 32px; height: 30px; }
.glabel { display: flex; justify-content: center; align-items: center; flex: 1; padding-top: 4px; }

.selectors { display: flex; height: 31px; flex: none; background: #f0f0f0; }
.selectors label { display: flex; align-items: center; width: 100px; padding-right: 5px; border-right: 1px solid #d6d6d6; }
.selectors label:first-child { width: 99px; }
select { appearance: none; border: 0; background: none; outline: 0; flex: 1; min-width: 0; padding: 0 2px; }

.work { display: flex; flex: 1; min-height: 0; }
.phead { display: flex; align-items: center; height: 29px; flex: none; background: #ededef; }
.grip { width: 10px; height: 24px; flex: none; margin: 0 0 0 5px; }
.ptitle { margin-left: 10px; }
.x { margin-left: auto; margin-right: 9px; width: 10px; height: 10px; display: flex; flex: none; }
.x svg { width: 10px; height: 10px; stroke: #8a8a8a; fill: none; }
.ptab { height: 29px; padding: 0 10px; }
.ptab.on { background: #fff; color: #1a73e8; margin-left: 8px; }

.nav { width: 130px; flex: none; display: flex; flex-direction: column; border-right: 1px solid #d0d0d0; border-top: 1px solid #d6d6d6; }
.navbody { display: flex; flex: 1; min-height: 0; }
.navlist { width: 117px; overflow: hidden; }
.navhead { display: flex; align-items: center; width: 100%; height: 42px; padding: 0 6px 1px 9px; background: #eff1f5; border-bottom: 1px solid #fff; text-align: left; }
.navhead.on { background: #d2d2d2; color: #4a7fe8; }
.navico { width: 28px; height: 28px; flex: none; margin-right: 12px; }
.chev { width: 10px; height: 6px; margin-left: auto; fill: none; stroke: #9aa9c6; }
.chev.up { transform: rotate(180deg); }
.navsub { display: block; width: 100%; height: 28px; padding: 0 0 0 21px; text-align: left; }
.navsub.on { background: #dcebfd; color: #1a73e8; }
.thumb { width: 4px; border-radius: 2px; background: #ebebeb; }
.navthumb { margin: 11px 0 0 4px; height: 428px; }

.side { width: 290px; flex: none; display: flex; flex-direction: column; padding: 0 4px; gap: 4px; }
.panel { display: flex; flex-direction: column; border: 1px solid #d2d2d2; }
.comps { height: 403px; flex: none; }
.attrs { flex: 1; min-height: 0; border-bottom: 0; }
.tools { display: flex; gap: 9px; padding: 6px 10px; }
.tools button { width: 32px; height: 26px; border-radius: 3px; background: #f4f4f5; display: flex; align-items: center; justify-content: center; }
.pair { display: flex; gap: 1px; }
.tools .slim { width: 12px; }
.tools .next { width: 26px; margin-left: auto; border: 1px solid #dcdcdc; }
.next svg { width: 8px; height: 6px; }
.search { display: flex; align-items: center; height: 26px; margin: 1px 9px 10px 8px; padding: 1px 12px 0 11px; border-radius: 13px; background: #f3f3f3; }
.search input { flex: 1; min-width: 0; border: 0; padding: 0; background: none; outline: 0; }
.search input::placeholder { color: #7a7a7a; }
.search svg { width: 11px; height: 11px; fill: none; stroke: #999; }
.tree { list-style: none; margin: 0; padding: 0; }
.branch { display: flex; align-items: center; gap: 3px; height: 24px; padding-left: 6px; }
.leaf { height: 24px; padding: 1px 0 2px 21px; line-height: 21px; }
.leaf span { display: block; width: 103px; padding-left: 3px; border-radius: 3px; }
.leaf.on span { background: #c2d9f2; }

.attrbody { display: flex; flex: 1; min-height: 0; overflow: hidden; }
.ptable { width: 268px; flex: none; align-self: flex-start; border-collapse: separate; border-spacing: 0; table-layout: fixed; }
.ptable .k { width: 101px; }
.ptable .v { width: 126px; }
.ptable .c { width: 41px; }
.ptable th { height: 25px; padding: 2px 0 0; font-weight: 400; background: #ebebeb; border-right: 1px solid #d0d0d0; border-bottom: 1px solid #d0d0d0; }
.ptable td { height: 25px; padding: 0 0 0 15px; }
.ptable td:nth-child(2) { padding: 0; }
.ptable td.mid { padding: 0 2px 2px 0; text-align: center; }
.ptable .cat td { background: #ebebeb; padding: 0 0 0 9px; }
.cat .tri { display: inline-block; margin: 0 6px 3px 0; }
.cat .dot { display: inline-block; margin: 0 0 8px 20px; }
.blue { color: #1a5cff; }
.val { display: flex; align-items: center; height: 21px; width: 125px; padding: 0 4px 0 3px; border: 1px solid #dcdcdc; }
.val input { flex: 1; min-width: 0; width: 80px; border: 0; padding: 0; outline: 0; background: none; }
.val .grey { color: #8a8a8a; }
.val .dot { margin-bottom: 11px; }
.val svg { width: 11px; height: 11px; margin: 0 1px 3px 1px; fill: none; stroke: #333; }
.attrthumb { height: 175px; margin: 13px 0 0 5px; }

input[type="checkbox"] { appearance: none; display: grid; place-content: center; width: 14px; height: 14px; flex: none; margin: 0; border: 1px solid #888; border-radius: 2px; background: #fff; }
.mid input[type="checkbox"] { margin: 0 auto; }
input[type="checkbox"]:checked { border-color: #2a7de1; background: #2a7de1; }
input[type="checkbox"]:checked::before { content: ""; width: 10px; height: 9px; background: #fff; clip-path: polygon(0 50%, 15% 36%, 38% 62%, 86% 4%, 100% 18%, 40% 92%); }
input.part { border: 1px solid #888; }
input.part::before { content: ""; width: 10px; height: 10px; border: 1px solid #2a7de1; background: #99c8ff; }
input[type="radio"] { appearance: none; display: grid; place-content: center; width: 14px; height: 14px; flex: none; margin: 0; border: 1px solid #888; border-radius: 7px; background: #fff; }
input[type="radio"]:checked::before { content: ""; width: 6px; height: 6px; border-radius: 3px; background: #2a7de1; }

.canvas { position: relative; flex: 1; min-width: 0; background: #000; overflow: hidden; }
.cad { display: block; }
.cadtext { fill: #fff; font-size: 18px; text-anchor: middle; font-family: "Noto Sans CJK SC", sans-serif; }
.xyz { font-size: 16px; text-anchor: middle; font-family: "Liberation Sans", sans-serif; }
.fold { position: absolute; left: 0; top: 376px; width: 16px; height: 62px; border-radius: 0 4px 4px 0; background: #595959; color: #ccc; font-size: 16px; }

.dialog { position: absolute; left: 46px; top: 55px; width: 970px; background: #fff; border-radius: 8px; box-shadow: 0 0 0 1px #444; color: #333; }
.dhead { display: flex; align-items: center; height: 38px; padding: 0 13px 0 11px; }
.dhead .x { margin-right: 0; }
h2 { margin: 0; font-size: 14px; font-weight: 400; }
.dbody { display: flex; gap: 15px; padding: 6px 11px 0 20px; }
.left { flex: 1; min-width: 0; }
h3 { display: flex; align-items: center; gap: 6px; height: 24px; margin: 0; font-size: 12px; font-weight: 700; }
h3::after { content: ""; flex: 1; height: 1px; background: #c4c4c4; }
h3.wide { gap: 6px; }
.checks { display: flex; height: 22px; padding-left: 12px; }
.dialog label { display: flex; align-items: center; gap: 4px; flex: none; }
.tbox { height: 174px; margin: 3px -9px 0 0; border: 1px solid #c0c0c0; border-right: 0; }
.cond { width: 698px; border-collapse: separate; border-spacing: 0; table-layout: fixed; }
.cond th { height: 21px; padding: 1px 0 0; font-weight: 400; background: #f0f0f0; border-right: 1px solid #c8c8c8; border-bottom: 1px solid #c8c8c8; }
.cond td { height: 22px; padding: 0 0 2px; text-align: center; border-right: 1px solid #d0d0d0; border-bottom: 1px solid #d0d0d0; }
.cond td:first-child { background: #f0f0f0; padding: 2px 0 0; }
.btns { display: flex; gap: 6px; padding-top: 6px; }
.grow { flex: 1; }
.btns button, .dfoot button { width: 80px; height: 26px; padding-top: 2px; border: 1px solid #c4c4c4; border-radius: 4px; background: #fff; }
h3.plate { margin-top: 2px; padding-left: 1px; }
.line { display: flex; align-items: center; height: 24px; padding-left: 12px; color: #1a1a1a; }
.cmp { display: flex; align-items: center; width: 50px; height: 20px; margin-left: 6px; padding-right: 5px; border: 1px solid #999; }
.num { width: 50px; height: 20px; margin: 0 6px 0 5px; padding: 0 3px; border: 1px solid #c4c4c4; border-radius: 3px; outline: 0; }
.modes { height: 22px; }
.modes label:first-child { width: 216px; }
.cover label { gap: 3px; color: #333; }
fieldset { width: 200px; height: 359px; min-width: 0; margin: 33px 0 0; padding: 0 5px 0 14px; border: 1px solid #c8c8c8; border-radius: 4px; }
legend { height: 16px; margin-left: -6px; padding: 0; }
.frow { display: flex; align-items: center; gap: 10px; height: 24px; overflow: hidden; }
.dialog .frow label { gap: 6px; }
.frow.l2 { padding-left: 20px; }
.frow.l3 { padding-left: 55px; }
.dialog .frow.l3 label { gap: 7px; }
.hbar { width: 130px; height: 4px; margin: 65px 0 0 3px; border-radius: 2px; background: #ebebeb; }
.dfoot { display: flex; justify-content: flex-end; gap: 6px; margin: 14px 11px 0; padding: 9px 0 10px; border-top: 1px solid #c8c8c8; }
.dfoot .ok { border-color: #2a7de1; background: #2a7de1; color: #fff; }

.marks { position: absolute; left: 0; top: 0; pointer-events: none; }
</style>
